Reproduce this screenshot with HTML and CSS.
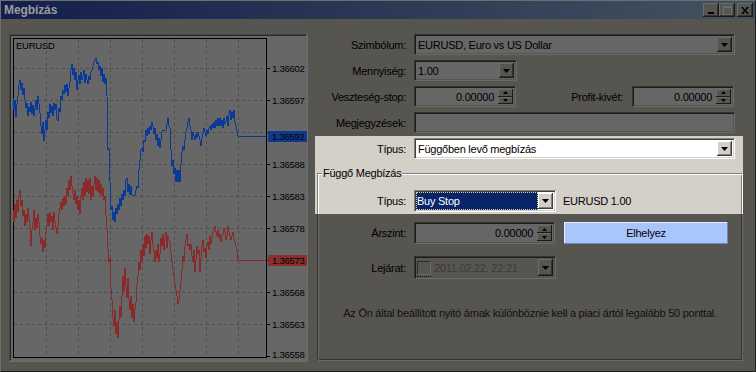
FILE: index.html
```html
<!DOCTYPE html>
<html>
<head>
<meta charset="utf-8">
<link rel="stylesheet" href="styles.css">
</head>
<body>
<div class="window">
  <div class="titlebar">
    <span class="title">Megbízás</span>
    <div class="tbtns">
      <div class="tbtn"><svg width="8" height="8" viewBox="0 0 8 8"><rect x="1" y="6" width="6" height="2" fill="#000"/></svg></div>
      <div class="tbtn"><svg width="9" height="9" viewBox="0 0 9 9"><rect x="0.5" y="0.5" width="8" height="8" fill="none" stroke="#6e6e6e"/><rect x="0" y="0" width="9" height="2" fill="#6e6e6e"/></svg></div>
      <div class="tbtn close"><svg width="8" height="7" viewBox="0 0 8 7"><path d="M0 0h2l2 2.4L6 0h2L5 3.5 8 7H6L4 4.6 2 7H0l3-3.5z" fill="#000"/></svg></div>
    </div>
  </div>
  <div class="content">
    <div class="chart">
      <svg width="299" height="328" viewBox="9 34 299 328">
        <rect x="9" y="34" width="299" height="328" fill="#676767"/>
        <path d="M9.5 361V34.5H307" stroke="#454443" fill="none"/>
        <path d="M10.5 360V35.5H306" stroke="#2b2b2b" fill="none"/>
        <path d="M9 361.5H307.5V34" stroke="#6e6e6e" fill="none"/>
        <text x="16" y="49" class="ctext">EURUSD</text>
        <g stroke="#4f4f4f" stroke-dasharray="3 3" fill="none">
          <path d="M14 68.5H266M14 100.5H266M14 132.5H266M14 164.5H266M14 196.5H266M14 228.5H266M14 260.5H266M14 292.5H266M14 324.5H266"/>
          <path d="M46.5 39V357M78.5 39V357M110.5 39V357M142.5 39V357M174.5 39V357M206.5 39V357M238.5 39V357"/>
        </g>
        <rect x="13.5" y="38.5" width="253" height="319" fill="none" stroke="#000"/>
        <path d="M266 68.5h4M266 100.5h4M266 132.5h4M266 164.5h4M266 196.5h4M266 228.5h4M266 260.5h4M266 292.5h4M266 324.5h4M266 356.5h4" stroke="#000"/>
        <g class="ctext">
          <text x="272" y="72">1.36602</text>
          <text x="272" y="104">1.36597</text>
          <text x="272" y="168">1.36588</text>
          <text x="272" y="200">1.36583</text>
          <text x="272" y="232">1.36578</text>
          <text x="272" y="296">1.36568</text>
          <text x="272" y="328">1.36563</text>
          <text x="272" y="358">1.36558</text>
        </g>
        <polyline fill="none" stroke="#8a2b2b" stroke-width="1" shape-rendering="crispEdges" points="13,210 14,222 15,204 16,218 17,200 18,212 19,196 20,190 21,206 22,200 23,216 24,210 25,226 26,214 27,222 28,208 29,218 30,226 31,246 32,230 33,222 34,210 35,230 36,218 37,228 38,214 39,222 40,236 41,244 42,238 43,252 44,240 45,248 46,232 47,226 48,214 49,226 50,212 51,222 52,216 53,230 54,212 55,222 56,228 57,234 58,226 59,214 60,208 61,202 62,210 63,198 64,206 65,196 66,204 67,188 68,196 69,180 70,190 71,176 72,186 73,194 74,200 75,190 76,204 77,196 78,210 79,200 80,214 81,196 82,188 83,200 84,182 85,196 86,178 87,192 88,180 89,194 90,178 91,200 92,186 93,196 94,184 95,176 96,190 97,178 98,192 99,180 100,194 101,184 102,196 103,188 104,200 105,196 106,216 107,228 108,250 109,262 110,258 111,288 112,300 113,318 114,326 115,310 116,334 117,322 118,338 119,320 120,306 121,318 122,296 123,276 124,292 125,268 126,286 127,298 128,278 129,300 130,310 131,296 132,318 133,304 134,322 135,310 136,302 137,284 138,276 139,262 140,270 141,250 142,262 143,244 144,256 145,236 146,248 147,234 148,244 149,236 150,254 151,240 152,232 153,246 154,252 155,262 156,250 157,258 158,244 159,262 160,254 161,238 162,246 163,234 164,250 165,238 166,232 167,248 168,236 169,240 170,242 171,254 172,262 173,270 174,276 175,284 176,290 177,296 178,304 179,300 180,290 181,282 182,270 183,256 184,262 185,246 186,240 187,234 188,246 189,244 190,250 191,244 192,256 193,262 194,250 195,272 196,260 197,246 198,254 199,250 200,272 201,258 202,246 203,240 204,252 205,248 206,258 207,246 208,242 209,250 210,236 211,244 212,238 213,232 214,228 215,226 216,232 217,236 218,230 219,238 220,234 221,242 222,236 223,234 224,228 225,232 226,240 227,236 228,226 229,232 230,236 231,240 232,236 233,232 234,238 235,242 236,246 237,250 238,260 266,260"/>
        <polyline fill="none" stroke="#0b3a96" stroke-width="1" shape-rendering="crispEdges" points="13,98 14,110 15,100 16,117 17,104 18,96 19,85 20,80 21,90 22,83 23,95 24,88 25,100 26,108 27,103 28,116 29,107 30,112 31,102 32,114 33,105 34,116 35,108 36,100 37,110 38,96 39,104 40,113 41,126 42,134 43,122 44,141 45,130 46,120 47,130 48,112 49,118 50,104 51,113 52,106 53,116 54,103 55,110 56,104 57,119 58,121 59,108 60,112 61,96 62,100 63,90 64,94 65,85 66,92 67,84 68,96 69,88 70,82 71,70 72,64 73,75 74,68 75,80 76,72 77,90 78,80 79,75 80,84 81,72 82,80 83,76 84,70 85,83 86,74 87,80 88,84 89,76 90,80 91,72 92,70 93,66 94,62 95,60 96,58 97,64 98,62 99,70 100,66 101,76 102,68 103,82 104,74 105,84 106,78 107,96 108,150 109,148 110,182 111,210 112,206 113,220 114,212 115,222 116,208 117,214 118,204 119,210 120,198 121,206 122,194 123,200 124,190 125,196 126,180 127,178 128,192 129,184 130,195 131,186 132,195 135,195 136,190 137,186 138,188 139,170 140,160 141,150 142,148 143,152 144,140 145,142 146,130 147,136 148,128 149,134 150,126 151,130 152,122 153,126 154,134 155,128 156,140 157,134 158,146 159,138 160,148 161,140 162,132 163,130 164,131 166,130 167,124 168,118 169,126 170,128 171,150 172,166 173,160 174,174 175,168 176,182 177,170 178,182 179,170 180,182 181,164 182,152 183,146 184,150 185,140 186,132 187,128 188,122 189,118 190,126 191,130 192,140 193,132 194,136 195,140 196,134 197,138 198,132 199,136 200,140 201,146 202,138 203,134 204,128 205,132 206,136 207,130 208,134 209,128 210,126 211,130 212,124 213,128 214,122 215,128 216,120 217,126 218,118 219,126 220,118 221,126 222,120 223,128 224,118 225,124 226,122 227,116 228,126 229,114 230,110 231,120 232,112 233,118 234,110 235,122 236,126 237,130 238,136 266,136"/>
        <rect x="268" y="131" width="39" height="11" fill="#0d3a8e"/>
        <text x="272" y="140" class="ctext" fill="#b7c2d8">1.36592</text>
        <rect x="268" y="255" width="39" height="11" fill="#8a2f2f"/>
        <text x="272" y="264" class="ctext" fill="#c9a8a8">1.36573</text>
      </svg>
    </div>

    <div class="form">
      <div class="row">
        <span class="lbl">Szimbólum:</span>
        <div class="field combo w-sym"><span class="val">EURUSD, Euro vs US Dollar</span><span class="dd"><svg width="7" height="4" viewBox="0 0 7 4"><path d="M0 0h7L3.5 4z" fill="#000"/></svg></span></div>
      </div>
      <div class="row gap">
        <span class="lbl">Mennyiség:</span>
        <div class="field combo w-qty"><span class="val">1.00</span><span class="dd"><svg width="7" height="4" viewBox="0 0 7 4"><path d="M0 0h7L3.5 4z" fill="#000"/></svg></span></div>
      </div>
      <div class="row gap">
        <span class="lbl">Veszteség-stop:</span>
        <div class="field spinbox w-sl"><span class="num">0.00000</span><span class="spin"><span class="sb"><svg width="5" height="3" viewBox="0 0 5 3"><path d="M0 3h5L2.5 0z" fill="#000"/></svg></span><span class="sb"><svg width="5" height="3" viewBox="0 0 5 3"><path d="M0 0h5L2.5 3z" fill="#000"/></svg></span></span></div>
        <span class="lbl2">Profit-kivét:</span>
        <div class="field spinbox w-sl"><span class="num">0.00000</span><span class="spin"><span class="sb"><svg width="5" height="3" viewBox="0 0 5 3"><path d="M0 3h5L2.5 0z" fill="#000"/></svg></span><span class="sb"><svg width="5" height="3" viewBox="0 0 5 3"><path d="M0 0h5L2.5 3z" fill="#000"/></svg></span></span></div>
      </div>
      <div class="row gap">
        <span class="lbl">Megjegyzések:</span>
        <div class="field w-sym"></div>
      </div>

      <div class="hl">
        <div class="row">
          <span class="lbl">Típus:</span>
          <div class="field lt combo w-sym"><span class="val">Függőben levő megbízás</span><span class="dd lt"><svg width="7" height="4" viewBox="0 0 7 4"><path d="M0 0h7L3.5 4z" fill="#000"/></svg></span></div>
        </div>
        <div class="grp-top">
          <span class="legend">Függő Megbízás</span>
          <div class="row tall">
            <span class="lbl in">Típus:</span>
            <div class="field lt combo w-typ"><span class="sel">Buy Stop</span><span class="dd lt"><svg width="7" height="4" viewBox="0 0 7 4"><path d="M0 0h7L3.5 4z" fill="#000"/></svg></span></div>
            <span class="info">EURUSD 1.00</span>
          </div>
        </div>
      </div>

      <div class="grp-rest">
        <div class="row tall">
          <span class="lbl in">Árszint:</span>
          <div class="field spinbox w-price"><span class="num">0.00000</span><span class="spin"><span class="sb"><svg width="5" height="3" viewBox="0 0 5 3"><path d="M0 3h5L2.5 0z" fill="#000"/></svg></span><span class="sb"><svg width="5" height="3" viewBox="0 0 5 3"><path d="M0 0h5L2.5 3z" fill="#000"/></svg></span></span></div>
          <button class="place">Elhelyez</button>
        </div>
        <div class="row tall exp">
          <span class="lbl in">Lejárat:</span>
          <div class="field combo dis w-typ"><span class="chk"></span><span class="val dim">2011.02.22. 22:21</span><span class="dd"><svg width="7" height="4" viewBox="0 0 7 4"><path d="M0 0h7L3.5 4z" fill="#000"/></svg></span></div>
        </div>
        <p class="msg">Az Ön által beállított nyitó árnak különböznie kell a piaci ártól legalább 50 ponttal.</p>
      </div>
    </div>
  </div>
</div>
</body>
</html>
```

FILE: styles.css
```css
* { box-sizing: border-box; margin: 0; padding: 0; }
html, body { width: 756px; height: 372px; overflow: hidden; background: #57554f; }
body {
  font-family: "Liberation Sans", Arial, sans-serif;
  font-size: 11px;
  letter-spacing: -0.25px;
  color: #000;
}
.window {
  width: 756px;
  height: 372px;
  display: flex;
  flex-direction: column;
  background: #57554f;
  border: 1px solid;
  border-color: #6e6e6e #1e1e1e #1e1e1e #6e6e6e;
}
.titlebar {
  height: 18px;
  flex: none;
  display: flex;
  align-items: center;
  justify-content: space-between;
  background: linear-gradient(to right, #121f4c, #42535f);
  padding: 0 2px 0 3px;
}
.title { font-weight: bold; font-size: 12px; color: #9c9c9c; letter-spacing: -0.1px; }
.tbtns { display: flex; align-items: center; }
.tbtn {
  width: 16px;
  height: 14px;
  background: #57554f;
  box-shadow: inset -1px -1px #1a1a1a, inset 1px 1px #6c6c6c, inset -2px -2px #353431;
  display: flex;
  align-items: center;
  justify-content: center;
}
.tbtn.close { margin-left: 2px; }

.content { flex: 1; display: flex; gap: 7px; padding: 15px 0 0 8px; }
.chart { width: 299px; height: 328px; flex: none; }
.chart svg { display: block; }
.ctext { font-family: "Liberation Sans", Arial, sans-serif; font-size: 9.5px; letter-spacing: -0.25px; fill: #000; }

.form { width: 428px; flex: none; display: flex; flex-direction: column; }
.row { display: flex; align-items: center; height: 21px; flex: none; }
.row.gap { margin-top: 5px; }
.row.tall { height: 22px; }
.lbl { width: 91px; text-align: right; margin-right: 8px; flex: none; white-space: nowrap; }
.lbl.in { width: 88px; }
.lbl2 { width: 107px; text-align: right; margin-right: 9px; flex: none; }

.field {
  height: 100%;
  background: #666666;
  border: 1px solid;
  border-color: #353431 #6b6b6b #6b6b6b #353431;
  box-shadow: inset 1px 1px #1c1c1c, inset -1px -1px #57554f;
  display: flex;
  align-items: center;
  flex: none;
}
.field.lt {
  background: #fff;
  border-color: #808080 #fff #fff #808080;
  box-shadow: inset 1px 1px #404040, inset -1px -1px #d4d0c8;
}
.field.dis { background: #57554f; }
.w-sym { width: 321px; }
.w-qty { width: 103px; }
.w-sl { width: 102px; }
.w-typ { width: 142px; }
.w-price { width: 141px; }

.val { padding-left: 3px; white-space: nowrap; }
.val.dim { color: #3c3b38; padding-left: 3px; }
.dd {
  margin-left: auto;
  margin-right: 2px;
  width: 15px;
  height: calc(100% - 4px);
  background: #57554f;
  box-shadow: inset -1px -1px #1a1a1a, inset 1px 1px #6c6c6c, inset -2px -2px #353431;
  display: flex;
  align-items: center;
  justify-content: center;
}
.dd.lt {
  background: #d4d0c8;
  box-shadow: inset -1px -1px #404040, inset 1px 1px #fff, inset -2px -2px #808080;
}
.num { flex: 1; text-align: right; padding-right: 4px; }
.spin {
  width: 15px;
  height: calc(100% - 4px);
  margin-right: 2px;
  display: flex;
  flex-direction: column;
}
.sb {
  flex: 1;
  background: #57554f;
  box-shadow: inset -1px -1px #1a1a1a, inset 1px 1px #6c6c6c;
  display: flex;
  align-items: center;
  justify-content: center;
}

.hl {
  margin-top: 3px;
  height: 78px;
  flex: none;
  background: #d4d0c8;
  padding-top: 2px;
}
.grp-top {
  position: relative;
  margin: 14px 0 0 2px;
  width: 426px;
  height: 41px;
  border-top: 1px solid #808080;
  border-left: 1px solid #808080;
  border-right: 1px solid #fff;
  box-shadow: inset 1px 1px #fff, inset -1px 0 #808080;
  padding-top: 16px;
}
.legend {
  position: absolute;
  left: 4px;
  top: -8px;
  background: #d4d0c8;
  padding: 0 1px;
  line-height: 14px;
  white-space: nowrap;
}
.sel {
  width: 123px;
  height: 18px;
  margin-left: 1px;
  background: #0a246a;
  color: #fff;
  padding-left: 1px;
  line-height: 18px;
  outline: 1px dotted #d8d49c;
  outline-offset: -1px;
}
.info { margin-left: 7px; white-space: nowrap; }

.grp-rest {
  margin-left: 2px;
  width: 426px;
  height: 147px;
  flex: none;
  border-left: 1px solid #353431;
  border-right: 1px solid #696969;
  border-bottom: 1px solid #696969;
  box-shadow: inset 1px 0 #696969, inset -1px -1px #353431;
  padding-top: 8px;
  display: flex;
  flex-direction: column;
}
.place {
  margin-left: 9px;
  width: 164px;
  height: 22px;
  font: inherit;
  letter-spacing: inherit;
  color: #000;
  background: #a8c6fb;
  border: none;
  box-shadow: inset -1px -1px #6c88b8, inset 1px 1px #e4eeff;
}
.row.exp { margin-top: 12px; height: 23px; }
.chk {
  width: 14px;
  height: 14px;
  margin-left: 2px;
  flex: none;
  border: 1px solid;
  border-color: #2c2c2c #6b6b6b #6b6b6b #2c2c2c;
  background: #57554f;
  position: relative;
}
.chk::after {
  content: "";
  position: absolute;
  left: -1px;
  right: -1px;
  bottom: -3px;
  border-bottom: 1px dotted #111;
}
.msg { margin-top: 27px; text-align: center; line-height: 14px; color: #111; white-space: nowrap; }
```
